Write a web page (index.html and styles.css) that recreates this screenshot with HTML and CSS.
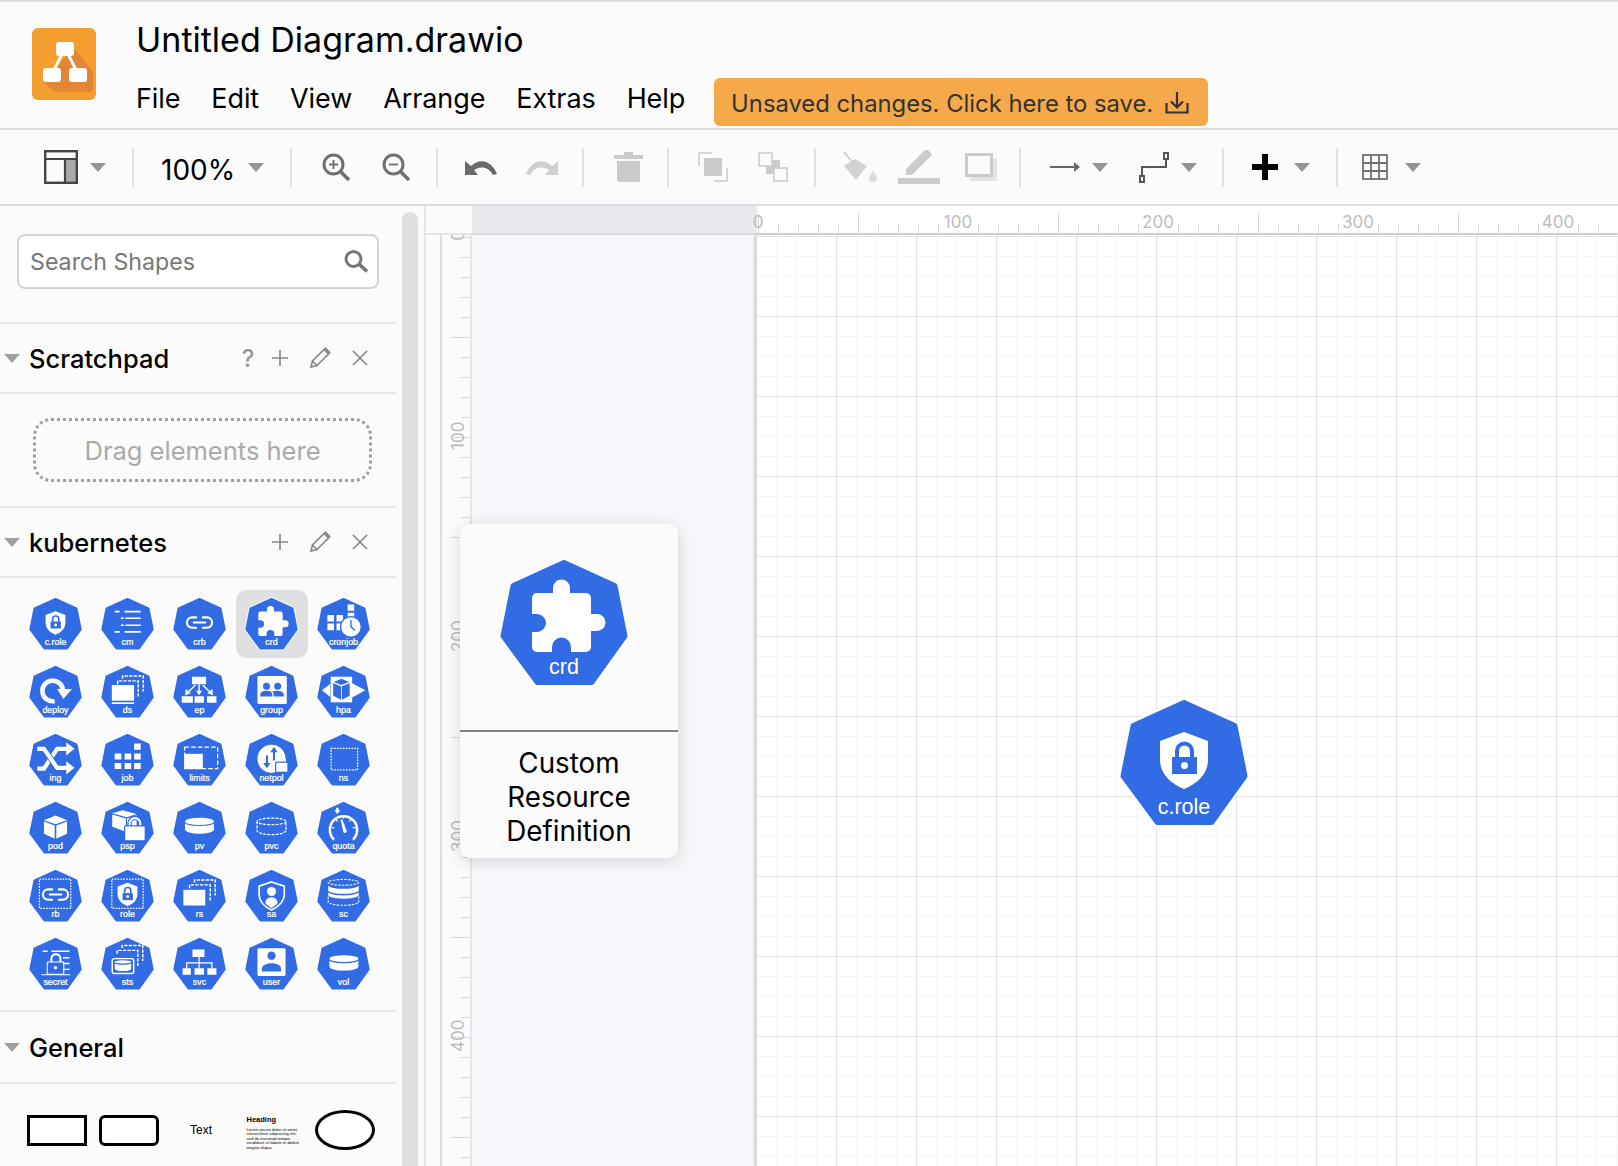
FILE: index.html
```html
<!DOCTYPE html>
<html lang="en">
<head>
    <meta charset="UTF-8">
    <title>Untitled Diagram.drawio</title>
    <link rel="stylesheet" href="styles.css">
</head>
<body>
    <svg class="defs" width="0" height="0">
        <defs>
            <g id="hex">
                <polygon class="hex-halo" points="64,3 114.5,26 124.5,76 91.5,122 37.5,122 3.5,76 13.5,26"/>
                <polygon class="hex-fill" points="64,3 114.5,26 124.5,76 91.5,122 37.5,122 3.5,76 13.5,26"/>
            </g>
            <g id="g-shield">
                <path fill="#fff" d="M64 32 L88 41 V60 C88 74 77 84 64 89 C51 84 40 74 40 60 V41 Z"/>
                <rect x="52" y="57" width="25" height="17" fill="#326ce5"/>
                <path d="M57 58 V51 a7.5 7.5 0 0 1 15 0 V58" fill="none" stroke="#326ce5" stroke-width="4"/>
                <circle cx="64.5" cy="65.5" r="3.5" fill="#fff"/>
            </g>
            <path id="g-puzzle" fill="#fff" d="M37 33 H53 V28 a8.5 8.5 0 0 1 17 0 V33 H86 a5 5 0 0 1 5 5 V54 H97 a8.5 8.5 0 0 1 0 17 H91 V87 a5 5 0 0 1 -5 5 H71 V87 a9.5 9.5 0 0 0 -19 0 V92 H37 a5 5 0 0 1 -5 -5 V72 H37 a9 9 0 0 0 0 -18 H32 V38 a5 5 0 0 1 5 -5 Z"/>
            <g id="g-link" fill="none" stroke="#fff" stroke-width="5" stroke-linecap="round">
                <path d="M56 47 H46 a12.5 12.5 0 0 0 0 25 H56"/>
                <path d="M72 47 H82 a12.5 12.5 0 0 1 0 25 H72"/>
                <path d="M50 59.5 H78"/>
            </g>
            <g id="g-pencil" fill="none" stroke="#8a8a8a" stroke-width="1.7">
                <path d="M2 20 L3.5 14 L15 2.5 L19.5 7 L8 18.5 Z"/>
                <path d="M3.5 14 L8 18.5"/>
                <path d="M15.5 1 L21 6.5" stroke-width="2.6"/>
            </g>
            <g id="g-folders" fill="none" stroke="#fff" stroke-width="3.5" stroke-dasharray="8 3">
                <path d="M40 44 V36 H90 V74"/>
                <path d="M52 30 V24 H102 V62"/>
            </g>
            <path id="caret" d="M0 0 H16 L8 9 Z"/>
        </defs>
    </svg>

    <header class="topbar">
        <svg class="logo" viewBox="0 0 64 72">
            <rect width="64" height="72" rx="6" fill="#f49e2f"/>
            <path d="M42 20 L61 44 V60 a4 4 0 0 1 -4 4 H23 L11 54 Z" fill="#e08635"/>
            <path d="M33 20 L20 46 M33 20 L46 46" stroke="#fff" stroke-width="3"/>
            <rect x="24" y="14" width="18" height="14" rx="3" fill="#fff"/>
            <rect x="11" y="40" width="18" height="14" rx="3" fill="#fff"/>
            <rect x="37" y="40" width="18" height="14" rx="3" fill="#fff"/>
        </svg>
        <div class="file-info">
            <div class="file-name">Untitled Diagram.drawio</div>
            <div class="menu-row">
                <nav class="menu">
                    <span>File</span><span>Edit</span><span>View</span><span>Arrange</span><span>Extras</span><span>Help</span>
                </nav>
                <div class="save-btn">
                    <span>Unsaved changes. Click here to save.</span>
                    <svg width="24" height="24" viewBox="0 0 24 24" fill="none" stroke="#333" stroke-width="2.2">
                        <path d="M1.5 12 V21.5 H22.5 V12"/>
                        <path d="M12 1 V16 M6 10.5 L12 16.5 L18 10.5"/>
                    </svg>
                </div>
            </div>
        </div>
    </header>

    <div class="toolbar">
        <div class="tb-group g1">
            <svg width="34" height="34" viewBox="0 0 34 34">
                <rect x="21" y="9" width="12" height="24" fill="#aaa"/>
                <rect x="1.2" y="1.2" width="31.6" height="31.6" fill="none" stroke="#444" stroke-width="2.4"/>
                <path d="M1 9 H33 M21 9 V33" stroke="#444" stroke-width="2.2"/>
            </svg>
            <svg class="caret" viewBox="0 0 16 9"><use href="#caret"/></svg>
        </div>
        <div class="tb-group g2">
            <span class="zoom-level">100%</span>
            <svg class="caret" viewBox="0 0 16 9"><use href="#caret"/></svg>
        </div>
        <div class="tb-group g3">
            <svg width="28" height="28" viewBox="0 0 28 28" fill="none" stroke="#707070">
                <circle cx="11.5" cy="11.5" r="9.5" stroke-width="3"/>
                <path d="M18 18 L27 27" stroke-width="3.6"/>
                <path d="M7 11.5 H16 M11.5 7 V16" stroke-width="1.8"/>
            </svg>
            <svg width="28" height="28" viewBox="0 0 28 28" fill="none" stroke="#707070">
                <circle cx="11.5" cy="11.5" r="9.5" stroke-width="3"/>
                <path d="M18 18 L27 27" stroke-width="3.6"/>
                <path d="M7 11.5 H16" stroke-width="1.8"/>
            </svg>
        </div>
        <div class="tb-group g4">
            <svg width="32" height="17" viewBox="0 0 32 17">
                <path fill="#6a6a6a" d="M0 2 V16 H13 L9 11 C15 7 23 7 28 16 L32 15 C27 2 15 -2 6 7 Z"/>
            </svg>
            <svg width="32" height="17" viewBox="0 0 32 17">
                <path fill="#cfcfcf" d="M32 2 V16 H19 L23 11 C17 7 9 7 4 16 L0 15 C5 2 17 -2 26 7 Z"/>
            </svg>
        </div>
        <div class="tb-group g5">
            <svg width="29" height="30" viewBox="0 0 29 30">
                <path fill="#cbcbcb" d="M10 0 H19 V3 H29 V7 H0 V3 H10 Z M3 9 H26 V28 a2 2 0 0 1 -2 2 H5 a2 2 0 0 1 -2 -2 Z"/>
            </svg>
        </div>
        <div class="tb-group g6">
            <svg width="30" height="30" viewBox="0 0 30 30" fill="none" stroke="#ccc" stroke-width="1.6">
                <path d="M1 14 V1 H14"/>
                <path d="M29 16 V29 H16"/>
                <rect x="6" y="6" width="18" height="18" fill="#cbcbcb" stroke="none"/>
            </svg>
            <svg width="30" height="30" viewBox="0 0 30 30" fill="none" stroke="#ccc" stroke-width="1.6">
                <rect x="8" y="8" width="14" height="14" fill="#cbcbcb" stroke="none"/>
                <rect x="1" y="1" width="13" height="13" fill="#fbfbfc"/>
                <rect x="16" y="16" width="13" height="13" fill="#fbfbfc"/>
            </svg>
        </div>
        <div class="tb-group g7">
            <svg width="36" height="30" viewBox="0 0 36 30">
                <path fill="#d2d2d2" d="M2 14 L13 7 L25 14 L14 28 Z"/>
                <path d="M2 0 L12 12" stroke="#cbcbcb" stroke-width="1.6"/>
                <path fill="#dcdcdc" d="M31 19 C33 22 35 24 35 26 a4 4 0 0 1 -8 0 C27 24 29 22 31 19 Z"/>
            </svg>
            <svg width="42" height="34" viewBox="0 0 42 34">
                <path fill="#cbcbcb" d="M8 19 L27 0 a3 3 0 0 1 3 0 L33 3 a3 3 0 0 1 0 3 L14 25 H8 Z"/>
                <rect x="0" y="28" width="42" height="6" fill="#cbcbcb"/>
            </svg>
            <svg class="tb-shadow" width="32" height="28" viewBox="0 0 32 28">
                <rect x="5" y="5" width="27" height="23" fill="#e4e4e4"/>
                <rect x="1.5" y="1.5" width="25" height="21" fill="#fbfbfc" stroke="#cbcbcb" stroke-width="3"/>
            </svg>
        </div>
        <div class="tb-group g8">
            <svg width="30" height="14" viewBox="0 0 30 14">
                <path d="M0 7 H27" stroke="#666" stroke-width="2"/>
                <path d="M24 2 L30 7 L24 12 Z" fill="#666"/>
            </svg>
            <svg class="caret" viewBox="0 0 16 9"><use href="#caret"/></svg>
            <svg class="tb-next" width="30" height="31" viewBox="0 0 30 31" fill="none" stroke="#555" stroke-width="2">
                <path d="M3 24 V15 H27 V6"/>
                <rect x="1" y="24" width="4" height="6" fill="#fbfbfc"/>
                <rect x="25" y="1" width="4" height="6" fill="#fbfbfc"/>
            </svg>
            <svg class="caret" viewBox="0 0 16 9"><use href="#caret"/></svg>
        </div>
        <div class="tb-group g9">
            <svg width="26" height="26" viewBox="0 0 26 26">
                <path d="M13 0 V26 M0 13 H26" stroke="#000" stroke-width="6"/>
            </svg>
            <svg class="caret" viewBox="0 0 16 9"><use href="#caret"/></svg>
        </div>
        <div class="tb-group g10">
            <svg width="26" height="26" viewBox="0 0 26 26" fill="none" stroke="#707070" stroke-width="1.8">
                <rect x="1" y="1" width="24" height="24"/>
                <path d="M9 1 V25 M17 1 V25 M1 9 H25 M1 17 H25"/>
            </svg>
            <svg class="caret" viewBox="0 0 16 9"><use href="#caret"/></svg>
        </div>
    </div>

    <main class="main">
        <aside class="sidebar">
            <div class="panel">
                <div class="search-wrap">
                    <div class="search">
                        <span>Search Shapes</span>
                        <svg width="25" height="23" viewBox="0 0 25 23" fill="none" stroke="#777">
                            <circle cx="9.5" cy="9" r="7.5" stroke-width="3"/>
                            <path d="M15 14 L23 21.5" stroke-width="3.6"/>
                        </svg>
                    </div>
                </div>

                <div class="section-head">
                    <svg class="sec-caret" viewBox="0 0 16 9"><use href="#caret"/></svg>
                    <span class="sec-title">Scratchpad</span>
                    <div class="sec-tools">
                        <span class="tool tool-help">?</span>
                        <span class="tool"><svg width="16" height="16" viewBox="0 0 16 16"><path d="M8 0 V16 M0 8 H16" stroke="#8a8a8a" stroke-width="1.7"/></svg></span>
                        <span class="tool"><svg width="22" height="22" viewBox="0 0 22 22"><use href="#g-pencil"/></svg></span>
                        <span class="tool"><svg width="16" height="16" viewBox="0 0 16 16"><path d="M1 1 L15 15 M15 1 L1 15" stroke="#8a8a8a" stroke-width="1.7"/></svg></span>
                    </div>
                </div>
                <div class="scratch-body">
                    <div class="drop-zone">Drag elements here</div>
                </div>

                <div class="section-head">
                    <svg class="sec-caret" viewBox="0 0 16 9"><use href="#caret"/></svg>
                    <span class="sec-title">kubernetes</span>
                    <div class="sec-tools">
                        <span class="tool"><svg width="16" height="16" viewBox="0 0 16 16"><path d="M8 0 V16 M0 8 H16" stroke="#8a8a8a" stroke-width="1.7"/></svg></span>
                        <span class="tool"><svg width="22" height="22" viewBox="0 0 22 22"><use href="#g-pencil"/></svg></span>
                        <span class="tool"><svg width="16" height="16" viewBox="0 0 16 16"><path d="M1 1 L15 15 M15 1 L1 15" stroke="#8a8a8a" stroke-width="1.7"/></svg></span>
                    </div>
                </div>
                <div class="shape-grid">
                    <div class="cell"><svg class="k8s" viewBox="0 0 128 126"><use href="#hex"/><use href="#g-shield"/><text x="64" y="114">c.role</text></svg></div>
                    <div class="cell"><svg class="k8s" viewBox="0 0 128 126"><use href="#hex"/>
                        <path d="M33 33 H45 M57 33 H96 M48 49 H55 M59 49 H96 M48 66 H55 M59 66 H96 M33 82 H45 M57 82 H96" stroke="#fff" stroke-width="4" fill="none"/>
                        <text x="64" y="114">cm</text></svg></div>
                    <div class="cell"><svg class="k8s" viewBox="0 0 128 126"><use href="#hex"/><use href="#g-link"/><text x="64" y="114">crb</text></svg></div>
                    <div class="cell selected"><svg class="k8s" viewBox="0 0 128 126"><use href="#hex"/><use href="#g-puzzle"/><text x="64" y="114">crd</text></svg></div>
                    <div class="cell"><svg class="k8s" viewBox="0 0 128 126"><use href="#hex"/>
                        <path fill="#fff" d="M74 16 H90 V31 H74 Z M25 41 H41 V57 H25 Z M47 41 H63 V57 H47 Z M74 36 H90 V52 H74 Z M25 62 H41 V78 H25 Z M47 62 H63 V78 H47 Z"/>
                        <circle cx="82" cy="70" r="25" fill="#fff" stroke="#326ce5" stroke-width="3"/>
                        <path d="M82 54 V70 L92 78" fill="none" stroke="#326ce5" stroke-width="3.5"/>
                        <text x="64" y="114">cronjob</text></svg></div>

                    <div class="cell"><svg class="k8s" viewBox="0 0 128 126"><use href="#hex"/>
                        <path d="M62 85 A25 25 0 1 1 82 58" fill="none" stroke="#fff" stroke-width="11"/>
                        <path fill="#fff" d="M68 56 H104 L83 80 Z"/>
                        <text x="64" y="114">deploy</text></svg></div>
                    <div class="cell"><svg class="k8s" viewBox="0 0 128 126"><use href="#hex"/>
                        <use href="#g-folders"/>
                        <rect x="26" y="46" width="54" height="38" fill="#fff"/>
                        <rect x="26" y="88" width="54" height="4" fill="#fff"/>
                        <text x="64" y="114">ds</text></svg></div>
                    <div class="cell"><svg class="k8s" viewBox="0 0 128 126"><use href="#hex"/>
                        <path fill="#fff" d="M46 26 H80 V44 H46 Z M21 73 H48 V89 H21 Z M52 73 H75 V89 H52 Z M82 73 H105 V89 H82 Z"/>
                        <path d="M63 44 V62 M54 46 L38 62 M72 46 L88 62" stroke="#fff" stroke-width="3.5"/>
                        <path fill="#fff" d="M56 60 H70 L63 71 Z M31 56 L43 66 L29 71 Z M95 56 L83 66 L97 71 Z"/>
                        <text x="64" y="114">ep</text></svg></div>
                    <div class="cell"><svg class="k8s" viewBox="0 0 128 126"><use href="#hex"/>
                        <rect x="30" y="24" width="71" height="68" rx="3" fill="#fff"/>
                        <circle cx="52" cy="49" r="8.5" fill="#326ce5"/><circle cx="79" cy="49" r="8.5" fill="#326ce5"/>
                        <path fill="#326ce5" d="M37 74 V69 C37 62 45 60 52 60 C59 60 66 62 66 69 V74 Z M69 74 V68 C69 65 68 63 66 61 C76 58 94 60 94 69 V74 Z"/>
                        <text x="64" y="114">group</text></svg></div>
                    <div class="cell"><svg class="k8s" viewBox="0 0 128 126"><use href="#hex"/>
                        <rect x="33" y="26" width="52" height="62" fill="#fff"/>
                        <path fill="#fff" d="M12 59 L32 43 V75 Z M117 59 L84 41 V77 Z"/>
                        <path fill="#326ce5" d="M59 31 L78 39 L59 46 L40 39 Z M39 42 L58 49 V82 L39 72 Z M60 49 L79 42 V72 L60 82 Z"/>
                        <text x="64" y="114">hpa</text></svg></div>

                    <div class="cell"><svg class="k8s" viewBox="0 0 128 126"><use href="#hex"/>
                        <path d="M20 84 H36 L68 36 H92" fill="none" stroke="#fff" stroke-width="10"/>
                        <path fill="#fff" d="M90 20 L110 36 L90 52 Z"/>
                        <path d="M20 36 H36 L68 82 H92" fill="none" stroke="#326ce5" stroke-width="14"/>
                        <path d="M20 36 H36 L68 82 H92" fill="none" stroke="#fff" stroke-width="10"/>
                        <path fill="#fff" d="M90 66 L110 82 L90 98 Z"/>
                        <text x="64" y="114">ing</text></svg></div>
                    <div class="cell"><svg class="k8s" viewBox="0 0 128 126"><use href="#hex"/>
                        <path fill="#fff" d="M80 23 H96 V38 H80 Z M33 47 H49 V62 H33 Z M57 47 H73 V62 H57 Z M80 47 H96 V62 H80 Z M33 70 H49 V85 H33 Z M57 70 H73 V85 H57 Z M80 70 H96 V85 H80 Z"/>
                        <text x="64" y="114">job</text></svg></div>
                    <div class="cell"><svg class="k8s" viewBox="0 0 128 126"><use href="#hex"/>
                        <rect x="28" y="32" width="80" height="52" fill="none" stroke="#fff" stroke-width="3" stroke-dasharray="11 5"/>
                        <rect x="27" y="48" width="45" height="37" fill="#fff"/>
                        <text x="64" y="114">limits</text></svg></div>
                    <div class="cell"><svg class="k8s" viewBox="0 0 128 126"><use href="#hex"/>
                        <circle cx="64" cy="60" r="34" fill="#fff"/>
                        <path d="M70 64 V40 M53 52 V76" stroke="#326ce5" stroke-width="5"/>
                        <path fill="#326ce5" d="M61 44 L70 31 L79 44 Z M44 70 H62 L53 83 Z"/>
                        <path d="M82 72 V65 a7.5 7.5 0 0 1 15 0 V72" fill="none" stroke="#fff" stroke-width="4"/>
                        <rect x="74" y="68" width="30" height="25" rx="2" fill="#fff" stroke="#326ce5" stroke-width="3"/>
                        <text x="64" y="114">netpol</text></svg></div>
                    <div class="cell"><svg class="k8s" viewBox="0 0 128 126"><use href="#hex"/>
                        <rect class="dash-box" x="34" y="35" width="64" height="52"/>
                        <text x="64" y="114">ns</text></svg></div>

                    <div class="cell"><svg class="k8s" viewBox="0 0 128 126"><use href="#hex"/>
                        <path fill="#fff" d="M64 33 L92 44 L64 54 L36 44 Z M36 47 L62 57 V89 L36 77 Z M66 57 L92 47 V77 L66 89 Z"/>
                        <text x="64" y="114">pod</text></svg></div>
                    <div class="cell"><svg class="k8s" viewBox="0 0 128 126"><use href="#hex"/>
                        <path fill="#fff" d="M52 20 L86 29 L62 37 L27 27 Z M27 30 L60 40 V72 L27 60 Z M63 40 L86 32 V60 L63 72 Z"/>
                        <path d="M69 62 V52 a13 13 0 0 1 26 0 V62" fill="none" stroke="#326ce5" stroke-width="11"/>
                        <path d="M69 62 V52 a13 13 0 0 1 26 0 V62" fill="none" stroke="#fff" stroke-width="5"/>
                        <rect x="57" y="58" width="50" height="36" rx="3" fill="#fff" stroke="#326ce5" stroke-width="3"/>
                        <text x="64" y="114">psp</text></svg></div>
                    <div class="cell"><svg class="k8s" viewBox="0 0 128 126"><use href="#hex"/>
                        <ellipse cx="64" cy="47" rx="35" ry="9" fill="#fff"/>
                        <path fill="#fff" d="M29 52 C36 60 92 60 99 52 V68 C92 80 36 80 29 68 Z"/>
                        <text x="64" y="114">pv</text></svg></div>
                    <div class="cell"><svg class="k8s" viewBox="0 0 128 126"><use href="#hex"/>
                        <g fill="none" stroke="#fff" stroke-width="3" stroke-dasharray="7 3">
                            <ellipse cx="64" cy="47" rx="35" ry="8"/>
                            <path d="M29 47 V70 C36 82 92 82 99 70 V47"/>
                        </g>
                        <text x="64" y="114">pvc</text></svg></div>
                    <div class="cell"><svg class="k8s" viewBox="0 0 128 126"><use href="#hex"/>
                        <path d="M41 91 A33 33 0 1 1 87 91" fill="none" stroke="#fff" stroke-width="6"/>
                        <path d="M64 33 V40 M35 62 H42 M86 62 H93 M45 42 L50 47 M83 42 L78 47" stroke="#fff" stroke-width="3"/>
                        <path fill="#fff" d="M57 43 L61 42 L72 70 A5 5 0 0 1 64 74 Z"/>
                        <path fill="#fff" d="M42 20 H56 L49 29 Z M46 14 H52 V22 H46 Z"/>
                        <text x="64" y="114">quota</text></svg></div>

                    <div class="cell"><svg class="k8s" viewBox="0 0 128 126"><use href="#hex"/>
                        <rect class="dash-box" x="25" y="22" width="76" height="71"/>
                        <use href="#g-link"/>
                        <text x="64" y="114">rb</text></svg></div>
                    <div class="cell"><svg class="k8s" viewBox="0 0 128 126"><use href="#hex"/>
                        <rect class="dash-box" x="26" y="22" width="76" height="71"/>
                        <use href="#g-shield" transform="translate(0 -1)"/>
                        <text x="64" y="114">role</text></svg></div>
                    <div class="cell"><svg class="k8s" viewBox="0 0 128 126"><use href="#hex"/>
                        <use href="#g-folders"/>
                        <rect x="25" y="48" width="53" height="38" fill="#fff"/>
                        <text x="64" y="114">rs</text></svg></div>
                    <div class="cell"><svg class="k8s" viewBox="0 0 128 126"><use href="#hex"/>
                        <path fill="#326ce5" stroke="#fff" stroke-width="4" d="M64 29 L95 39 V58 C95 76 80 90 64 97 C48 90 34 76 34 58 V39 Z"/>
                        <circle cx="64" cy="52" r="11" fill="#fff"/>
                        <path fill="#fff" d="M64 66 A16 16 0 0 1 79 80 C74 86 68 90 64 92 C60 90 54 86 49 80 A16 16 0 0 1 64 66 Z"/>
                        <text x="64" y="114">sa</text></svg></div>
                    <div class="cell"><svg class="k8s" viewBox="0 0 128 126"><use href="#hex"/>
                        <g fill="none" stroke="#fff" stroke-width="2.5" stroke-dasharray="6 3">
                            <ellipse cx="64" cy="30" rx="37" ry="7"/>
                            <path d="M27 64 V78 C36 88 92 88 101 78 V64"/>
                        </g>
                        <path fill="#fff" d="M27 38 C36 48 92 48 101 38 V50 C92 60 36 60 27 50 Z M27 54 C36 64 92 64 101 54 V62 C92 72 36 72 27 62 Z"/>
                        <text x="64" y="114">sc</text></svg></div>

                    <div class="cell"><svg class="k8s" viewBox="0 0 128 126"><use href="#hex"/>
                        <path d="M33 32 H45 M54 32 H98 M82 48 H98 M82 62 H98 M82 76 H98" stroke="#fff" stroke-width="3.5"/>
                        <path d="M54 58 V50 a11 11 0 0 1 22 0 V58" fill="none" stroke="#fff" stroke-width="5"/>
                        <rect x="44" y="58" width="40" height="30" rx="2" fill="none" stroke="#fff" stroke-width="2.5"/>
                        <circle cx="64" cy="72" r="4" fill="#fff"/>
                        <path d="M30 89 H100" stroke="#fff" stroke-width="2.5"/>
                        <text x="64" y="114">secret</text></svg></div>
                    <div class="cell"><svg class="k8s" viewBox="0 0 128 126"><use href="#hex"/>
                        <use href="#g-folders" transform="translate(-1 -6)"/>
                        <rect x="27" y="50" width="52" height="36" rx="5" fill="#326ce5" stroke="#fff" stroke-width="3.5"/>
                        <ellipse cx="53" cy="58" rx="20" ry="4" fill="#fff"/>
                        <path fill="#fff" d="M33 62 C40 66 66 66 73 62 V75 C66 82 40 82 33 75 Z"/>
                        <text x="64" y="114">sts</text></svg></div>
                    <div class="cell"><svg class="k8s" viewBox="0 0 128 126"><use href="#hex"/>
                        <path fill="#fff" d="M47 28 H76 V46 H47 Z M23 73 H43 V89 H23 Z M52 73 H75 V89 H52 Z M83 73 H105 V89 H83 Z"/>
                        <path d="M63 46 V73 M33 73 V60 H94 V73" fill="none" stroke="#fff" stroke-width="3"/>
                        <text x="64" y="114">svc</text></svg></div>
                    <div class="cell"><svg class="k8s" viewBox="0 0 128 126"><use href="#hex"/>
                        <rect x="30" y="25" width="68" height="67" rx="3" fill="#fff"/>
                        <circle cx="64" cy="43" r="10" fill="#326ce5"/>
                        <path fill="#326ce5" d="M41 81 V73 C41 65 54 61 64 61 C74 61 87 65 87 73 V81 Z"/>
                        <text x="64" y="114">user</text></svg></div>
                    <div class="cell"><svg class="k8s" viewBox="0 0 128 126"><use href="#hex"/>
                        <ellipse cx="65" cy="50" rx="35" ry="8" fill="#fff"/>
                        <path fill="#fff" d="M30 55 C37 63 93 63 100 55 V70 C93 82 37 82 30 70 Z"/>
                        <text x="64" y="114">vol</text></svg></div>
                </div>

                <div class="section-head section-last">
                    <svg class="sec-caret" viewBox="0 0 16 9"><use href="#caret"/></svg>
                    <span class="sec-title">General</span>
                </div>
                <div class="general-row">
                    <div class="gen-cell"><div class="shape-rect"></div></div>
                    <div class="gen-cell"><div class="shape-round"></div></div>
                    <div class="gen-cell gen-text">Text</div>
                    <div class="gen-cell">
                        <div class="gen-heading">
                            <b>Heading</b>
                            <p>Lorem ipsum dolor sit amet, consectetur adipisicing elit, sed do eiusmod tempor incididunt ut labore et dolore magna aliqua.</p>
                        </div>
                    </div>
                    <div class="gen-cell"><div class="shape-ellipse"></div></div>
                </div>
            </div>
            <div class="scroll-track"><div class="scroll-thumb"></div></div>
        </aside>

        <section class="workspace">
            <div class="ruler-corner"></div>
            <div class="ruler-top">
                <div class="ruler-off"></div>
                <div class="ruler-on">
                    <div class="h-labels"><span>0</span><span>100</span><span>200</span><span>300</span><span>400</span></div>
                </div>
            </div>
            <div class="ruler-left">
                <div class="v-labels"><span>0</span><span>100</span><span>200</span><span>300</span><span>400</span></div>
            </div>
            <div class="canvas">
                <div class="page">
                    <svg class="ghost" viewBox="0 0 128 126"><use href="#hex"/><use href="#g-shield"/><text x="64" y="114">c.role</text></svg>
                </div>
                <div class="tip">
                    <div class="tip-shape">
                        <svg class="tip-icon" viewBox="0 0 128 126"><use href="#hex"/><use href="#g-puzzle"/><text x="64" y="114">crd</text></svg>
                    </div>
                    <div class="tip-label">Custom<br>Resource<br>Definition</div>
                </div>
            </div>
        </section>
    </main>
</body>
</html>
```

FILE: styles.css
```css
* {
    box-sizing: border-box;
}

html, body {
    margin: 0;
    height: 100%;
}

body {
    width: 1618px;
    height: 1166px;
    overflow: hidden;
    display: flex;
    flex-direction: column;
    font-family: Inter, "Liberation Sans", sans-serif;
    color: #000;
    background-color: #fbfbfc;
}

.defs {
    position: absolute;
}

.hex-fill {
    fill: #326ce5;
    stroke: #326ce5;
    stroke-width: 6;
    stroke-linejoin: round;
}

.hex-halo {
    fill: none;
    stroke: #fff;
    stroke-width: 10;
    stroke-linejoin: round;
}

.dash-box {
    fill: none;
    stroke: #fff;
    stroke-width: 3;
    stroke-dasharray: 4 3;
}

.k8s, .ghost, .tip-icon {
    overflow: visible;
    display: block;
}

.k8s text, .ghost text, .tip-icon text {
    font-family: "Liberation Sans", Arial, sans-serif;
    font-size: 21.5px;
    fill: #fff;
    text-anchor: middle;
}

.k8s text {
    stroke: #fff;
    stroke-width: 0.6;
}

/* top bar */
.topbar {
    flex: none;
    height: 130px;
    display: flex;
    border-top: 2px solid #dfdfe3;
    border-bottom: 2px solid #dcdce2;
}

.logo {
    width: 64px;
    height: 72px;
    margin: 26px 0 0 32px;
}

.file-info {
    margin-left: 40px;
}

.file-name {
    margin-top: 16px;
    font-size: 34px;
    line-height: 44px;
}

.menu-row {
    display: flex;
    margin-top: 16px;
}

.menu {
    display: flex;
    gap: 31px;
    font-size: 27px;
    line-height: 36px;
    margin-top: 3px;
    letter-spacing: -0.1px;
}

.save-btn {
    display: flex;
    align-items: center;
    gap: 12px;
    width: 494px;
    height: 48px;
    margin-left: 29px;
    padding: 2px 0 0 17px;
    background-color: #f5a94a;
    border-radius: 6px;
    color: #333;
    font-size: 23.8px;
}

/* toolbar */
.toolbar {
    flex: none;
    height: 76px;
    display: flex;
    align-items: center;
    border-bottom: 2px solid #dcdce2;
}

.tb-group {
    height: 39px;
    display: flex;
    align-items: center;
    border-right: 2px solid #e2e2e2;
}

.tb-group svg {
    flex: none;
}

.caret {
    width: 16px;
    height: 9px;
    fill: #959595;
}

.g1 { width: 134px; padding-left: 44px; gap: 12px; }
.g2 { width: 158px; padding-left: 27px; gap: 14px; }
.g3 { width: 146px; padding-left: 30px; gap: 32px; }
.g4 { width: 146px; padding-left: 27px; gap: 29px; }
.g5 { width: 85px; padding-left: 30px; }
.g6 { width: 147px; padding-left: 29px; gap: 30px; }
.g7 { width: 205px; padding-left: 26px; gap: 20px; }
.g8 { width: 203px; padding-left: 29px; gap: 12px; }
.g9 { width: 114px; padding-left: 28px; gap: 16px; }
.g10 { width: auto; padding-left: 24px; gap: 17px; border-right: none; }

.tb-next {
    margin-left: 19px;
}

.tb-shadow {
    margin-left: 5px;
}

.zoom-level {
    width: 73px;
    margin-top: 5px;
    font-size: 28px;
    white-space: nowrap;
}

/* main area */
.main {
    flex: 1;
    min-height: 0;
    display: flex;
}

.sidebar {
    flex: none;
    width: 426px;
    display: flex;
    border-right: 2px solid #e8e8ec;
}

.panel {
    width: 396px;
    flex: none;
}

.search-wrap {
    height: 116px;
    padding: 28px 0 0 17px;
}

.search {
    width: 362px;
    height: 55px;
    display: flex;
    align-items: center;
    justify-content: space-between;
    padding: 0 8px 0 11px;
    background-color: #fff;
    border: 2px solid #d4d4d6;
    border-radius: 8px;
    color: #777;
    font-size: 23.2px;
}

.section-head {
    height: 72px;
    display: flex;
    align-items: center;
    border-top: 2px solid #e8e8e8;
    border-bottom: 2px solid #e8e8e8;
}

.section-last {
    height: 74px;
}

.sec-caret {
    width: 16px;
    height: 9px;
    margin: 0 9px 0 4px;
    fill: #a0a0a0;
    flex: none;
}

.sec-title {
    font-size: 25.5px;
    font-weight: 500;
}

.sec-tools {
    display: flex;
    align-items: center;
    margin-left: auto;
    margin-right: 16px;
}

.tool {
    width: 40px;
    display: flex;
    justify-content: center;
}

.tool-help {
    width: 24px;
    color: #999;
    font-size: 24px;
    font-weight: 500;
}

.scratch-body {
    height: 114px;
    padding: 26px 0 0 33px;
    margin-top: -2px;
}

.drop-zone {
    width: 339px;
    height: 64px;
    display: flex;
    align-items: center;
    justify-content: center;
    border: 3px dotted #a0a0a0;
    border-radius: 18px;
    color: #aaa;
    font-size: 25.5px;
}

.shape-grid {
    display: grid;
    grid-template-columns: repeat(5, 72px);
    grid-auto-rows: 68px;
    padding: 14px 0 0 20px;
    margin-top: -2px;
    height: 434px;
}

.cell {
    display: flex;
    justify-content: center;
    padding-top: 8px;
    border-radius: 10px;
}

.cell.selected {
    background-color: #e0e0e0;
}

.k8s {
    width: 53px;
    height: 52px;
    margin-left: -1px;
}

.general-row {
    display: grid;
    grid-template-columns: repeat(5, 72px);
    padding: 26px 0 0 21px;
}

.gen-cell {
    height: 40px;
    display: flex;
    align-items: center;
    justify-content: center;
}

.shape-rect, .shape-round {
    width: 60px;
    height: 31px;
    background-color: #fff;
    border: 3px solid #000;
}

.shape-round {
    border-radius: 6px;
}

.shape-ellipse {
    flex: none;
    width: 60px;
    height: 40px;
    background-color: #fff;
    border: 3px solid #000;
    border-radius: 50%;
}

.gen-text {
    font-family: "Liberation Sans", sans-serif;
    font-size: 12px;
}

.gen-heading {
    flex: none;
    width: 53px;
    margin-top: 5px;
    font-family: "Liberation Sans", sans-serif;
}

.gen-heading b {
    display: block;
    font-size: 7.5px;
    line-height: 10px;
}

.gen-heading p {
    margin: 3px 0 0;
    font-size: 4.2px;
    line-height: 4.5px;
}

.scroll-track {
    width: 16px;
    margin: 6px 0 0 6px;
    flex: none;
}

.scroll-thumb {
    height: 100%;
    background-color: #e0e0e0;
    border-radius: 8px 8px 0 0;
}

/* rulers and page */
.workspace {
    flex: 1;
    min-width: 0;
    display: grid;
    grid-template-columns: 14px 32px 1fr;
    grid-template-rows: 29px 1fr;
}

.ruler-corner {
    grid-column: 1 / 3;
    grid-row: 1;
    border-bottom: 2px solid #e4e4ea;
}

.ruler-top {
    grid-column: 3;
    grid-row: 1;
    display: flex;
    overflow: hidden;
    border-bottom: 2px solid #dcdce2;
}

.ruler-off {
    flex: none;
    width: 285px;
    background-color: #e8e9ed;
}

.ruler-on {
    flex: 1;
    min-width: 0;
    background-color: #fff;
    background-image:
        linear-gradient(to right, #d6d6d6 1px, transparent 1px),
        linear-gradient(to right, #d6d6d6 1px, transparent 1px);
    background-size: 20px 9px, 100px 19px;
    background-repeat: repeat-x;
    background-position: 1px bottom, 1px bottom;
}

.h-labels {
    display: flex;
    margin-top: 8px;
    transform: translateX(-99px);
}

.h-labels span {
    flex: none;
    width: 200px;
    text-align: center;
    color: #bdbdbd;
    font-size: 17px;
    line-height: 17px;
    background: linear-gradient(#fff, #fff) center / 38px 100% no-repeat;
}

.h-labels span:first-child {
    background: none;
}

.ruler-left {
    grid-column: 2;
    grid-row: 2;
    overflow: hidden;
    border-left: 2px solid #dcdce2;
    border-right: 2px solid #e4e4ea;
    background-image:
        linear-gradient(to bottom, #d6d6d6 1px, transparent 1px),
        linear-gradient(to bottom, #d6d6d6 1px, transparent 1px);
    background-size: 9px 20px, 19px 100px;
    background-repeat: repeat-y;
    background-position: right 2px, right 2px;
}

.v-labels {
    display: flex;
    flex-direction: column;
    margin-left: 7px;
    transform: translateY(-99px);
}

.v-labels span {
    flex: none;
    height: 200px;
    width: 18px;
    writing-mode: vertical-rl;
    transform: rotate(180deg);
    text-align: center;
    color: #bdbdbd;
    font-size: 17px;
    line-height: 18px;
}

.canvas {
    grid-column: 3;
    grid-row: 2;
    position: relative;
    display: flex;
    padding-left: 284px;
    background-color: #f6f7fa;
    min-height: 0;
}

.page {
    flex: 1;
    position: relative;
    background-color: #fff;
    box-shadow: -1px 0 3px rgba(0, 0, 0, 0.25);
    background-image:
        linear-gradient(to right, #e0e0e0 1px, transparent 1px),
        linear-gradient(to bottom, #e0e0e0 1px, transparent 1px),
        linear-gradient(to right, #f6f6f6 1px, transparent 1px),
        linear-gradient(to bottom, #f6f6f6 1px, transparent 1px);
    background-size: 80px 80px, 80px 80px, 20px 20px, 20px 20px;
    background-position: 0 1px;
}

.ghost {
    position: absolute;
    left: 364px;
    top: 465px;
    width: 128px;
    height: 126px;
}

.tip {
    position: absolute;
    top: 289px;
    left: -12px;
    width: 218px;
    height: 334px;
    background-color: #fbfbfc;
    border-radius: 10px;
    box-shadow: 0 3px 16px rgba(0, 0, 0, 0.14);
}

.tip-shape {
    height: 208px;
    padding: 36px 0 0 40px;
    border-bottom: 2px solid #808080;
}

.tip-icon {
    width: 128px;
    height: 126px;
}

.tip-label {
    padding-top: 14px;
    text-align: center;
    font-size: 27.8px;
    line-height: 34px;
}
```
